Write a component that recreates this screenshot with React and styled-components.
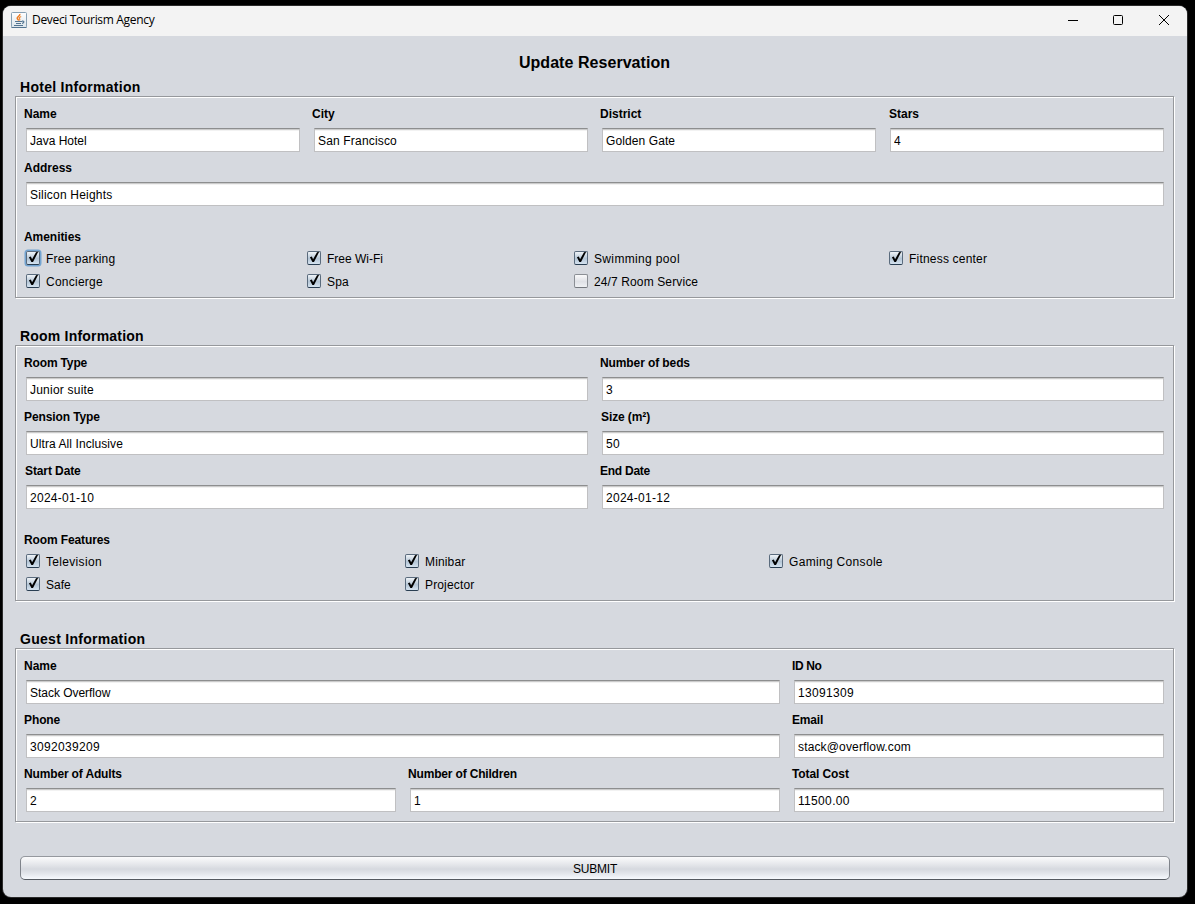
import React from "react";
import styled, { createGlobalStyle, css } from "styled-components";

const GlobalStyle = createGlobalStyle`
  * { box-sizing: border-box; }
  html, body { margin: 0; background: #000; }
  body { overflow: hidden; }
`;

const Desktop = styled.div`
  width: 1195px;
  height: 904px;
  padding: 6px 0 0 3px;
  background: #000;
  color: #000;
  font-family: "Liberation Sans", Arial, sans-serif;
  font-size: 12px;
`;

const Window = styled.div`
  display: flex;
  flex-direction: column;
  width: 1184px;
  height: 891px;
  overflow: hidden;
  border-radius: 8px;
  background: #d6d9df;
  box-shadow: 0 0 0 1px #2b2b2b;
`;

const TitleBar = styled.header`
  display: flex;
  align-items: center;
  flex: none;
  height: 30px;
  padding: 0 0 2px 8px;
  background: #f3f3f3;
`;

const WindowTitle = styled.div`
  flex: 1;
  margin-left: 5px;
  font-family: "Open Sans", "Noto Sans", sans-serif;
  font-size: 12px;
  line-height: 28px;
  letter-spacing: -0.32px;
`;

const WindowButton = styled.div`
  display: flex;
  align-items: center;
  justify-content: ${(p) => p.$align || "center"};
  width: 46px;
  height: 28px;
  padding-left: ${(p) => p.$inset || 0}px;
`;

const Body = styled.main`
  display: flex;
  flex-direction: column;
  padding: 0 13px 0 12px;
`;

const Heading = styled.h1`
  height: 39px;
  margin: 0;
  font-size: 16px;
  line-height: 54px;
  text-align: center;
  letter-spacing: 0.05px;
`;

const Section = styled.section`
  margin-bottom: ${(p) => p.$after}px;
`;

const SectionTitle = styled.h2`
  height: 21px;
  margin: 0 0 0 5px;
  font-size: 14px;
  line-height: 24px;
  letter-spacing: ${(p) => p.$spacing || 0.28}px;
`;

const Panel = styled.div`
  height: ${(p) => p.$height}px;
  padding: 1px 9px 0 10px;
  border: 1px solid #96989c;
  box-shadow: 1px 1px 0 #fff, inset 1px 1px 0 #fff;
`;

const FieldRow = styled.div`
  display: grid;
  grid-template-columns: ${(p) => p.$columns};
  column-gap: 14px;
`;

const Label = styled.label`
  display: block;
  height: ${(p) => p.$height || 30}px;
  margin-left: ${(p) => -2 + (p.$shift || 0)}px;
  padding-top: ${(p) => p.$top || 9}px;
  font-weight: bold;
  line-height: 14px;
  letter-spacing: ${(p) => p.$spacing || 0}px;
  white-space: nowrap;
`;

const Input = styled.input`
  display: block;
  width: 100%;
  height: 24px;
  margin: 0;
  padding: 1px 3px 0;
  border: 1px solid #c0c0c2;
  border-top-color: #8d8e8f;
  border-radius: 0;
  outline: none;
  background: #fff;
  box-shadow: inset 0 1px 0 #cbcbcb, inset 0 2px 0 #f2f2f2;
  color: #000;
  font: 12px/20px "Liberation Sans", Arial, sans-serif;
  letter-spacing: ${(p) => p.$spacing}px;
`;

const CheckGrid = styled.div`
  display: grid;
  grid-template-columns: ${(p) => p.$columns};
  grid-auto-rows: 23px;
`;

const CheckItem = styled.div`
  display: flex;
  align-items: flex-start;
  gap: 6px;
  line-height: 17px;
  letter-spacing: ${(p) => p.$spacing}px;
  white-space: nowrap;
`;

const CheckBox = styled.span`
  display: block;
  flex: none;
  width: 14px;
  height: 14px;
  border: 1px solid #8b8f95;
  border-bottom-color: #74787e;
  border-radius: 2px;
  background: linear-gradient(#fafafb, #dfe1e6 55%, #eff1f4);
  ${(p) =>
    p.$checked &&
    css`
      border-color: #5a6b7d;
      border-bottom-color: #293e52;
      background: linear-gradient(#f0f4f8, #b4c5d5 55%, #d5e3f0);
    `}
  ${(p) =>
    p.$focused &&
    css`
      box-shadow: 0 0 0 1.5px #73a4d1;
    `}
`;

const CheckMark = styled.svg`
  display: block;
  margin: -1px;
  overflow: visible;
`;

const Submit = styled.button`
  height: 24px;
  margin: 0 4px 0 5px;
  padding: 1px 0 0;
  border: 1px solid #7f838a;
  border-top-color: #95989e;
  border-bottom-color: #555a61;
  border-radius: 5px;
  background: linear-gradient(#fbfbfc 0%, #e4e6ea 35%, #d6d9df 55%, #e3e6eb 75%, #f7fafe 100%);
  color: #000;
  font: 12px/20px "Liberation Sans", Arial, sans-serif;
  letter-spacing: -0.2px;
`;

function JavaIcon() {
  return (
    <svg width="16" height="16" viewBox="0 0 16 16" fill="none">
      <defs>
        <linearGradient id="tile" x1="0" y1="0" x2="0" y2="1">
          <stop offset="0" stopColor="#fff" />
          <stop offset="1" stopColor="#dce5eb" />
        </linearGradient>
      </defs>
      <rect x="0.5" y="0.5" width="15" height="15" rx="1" fill="url(#tile)" stroke="#87a0b3" />
      <path d="M0.5 15.5H15.5" stroke="#547591" />
      <path d="M8.8 2C9.5 4 5.8 4.6 6.2 6.4C6.4 7.3 7.6 7.7 7.7 8.6" stroke="#ee7b20" strokeWidth="1.5" />
      <path d="M10.2 4.5C8.2 5.2 7.8 6 8.7 7C9 7.5 8.8 8 8.5 8.6" stroke="#f08a35" strokeWidth="1.2" />
      <path d="M4 9.5H11M5 11.5H10M3 13.5H12" stroke="#547591" />
      <path d="M11 9.2C13.6 8.6 13.4 11 11 11.3" stroke="#547591" strokeWidth="1.2" />
    </svg>
  );
}

function Check({ label, checked = true, focused = false, spacing = 0 }) {
  return (
    <CheckItem $spacing={spacing}>
      <CheckBox $checked={checked} $focused={focused}>
        {checked && (
          <CheckMark width="14" height="14" viewBox="0 0 14 14">
            <path d="M2.9 6.2L4.8 5.5L6.1 8.2L10 1.2L12.2 0.8L7 11H5.4Z" fill="#000" />
          </CheckMark>
        )}
      </CheckBox>
      {label}
    </CheckItem>
  );
}

function Field({ label, value, shift, labelSpacing = 0, spacing = 0 }) {
  return (
    <div>
      <Label $shift={shift} $spacing={labelSpacing}>{label}</Label>
      <Input defaultValue={value} $spacing={spacing} />
    </div>
  );
}

export default function App() {
  return (
    <Desktop>
      <GlobalStyle />
      <Window>
        <TitleBar>
          <JavaIcon />
          <WindowTitle>Deveci Tourism Agency</WindowTitle>
          <WindowButton $inset={2}>
            <svg width="10" height="10" stroke="#000"><path d="M0 5.5H10" /></svg>
          </WindowButton>
          <WindowButton>
            <svg width="10" height="10" fill="none" stroke="#000"><rect x="0.5" y="0.5" width="9" height="9" rx="1" /></svg>
          </WindowButton>
          <WindowButton>
            <svg width="10" height="10" stroke="#000"><path d="M0 0L10 10M10 0L0 10" /></svg>
          </WindowButton>
        </TitleBar>
        <Body>
          <Heading>Update Reservation</Heading>

          <Section $after={26}>
            <SectionTitle>Hotel Information</SectionTitle>
            <Panel $height={202}>
              <FieldRow $columns="repeat(4, 274px)">
                <Field label="Name" value="Java Hotel" />
                <Field label="City" value="San Francisco" spacing={0.17} />
                <Field label="District" value="Golden Gate" spacing={0.1} />
                <Field label="Stars" value="4" shift={1} />
              </FieldRow>
              <FieldRow $columns="1fr">
                <Field label="Address" value="Silicon Heights" spacing={0.2} />
              </FieldRow>
              <Label $height={45} $top={24} $spacing={-0.05}>Amenities</Label>
              <CheckGrid $columns="281px 267px 315px auto">
                <Check label="Free parking" focused spacing={0.16} />
                <Check label="Free Wi-Fi" />
                <Check label="Swimming pool" spacing={0.35} />
                <Check label="Fitness center" spacing={0.2} />
                <Check label="Concierge" spacing={0.25} />
                <Check label="Spa" spacing={0.15} />
                <Check label="24/7 Room Service" checked={false} spacing={0.12} />
              </CheckGrid>
            </Panel>
          </Section>

          <Section $after={26}>
            <SectionTitle $spacing={0.2}>Room Information</SectionTitle>
            <Panel $height={256}>
              <FieldRow $columns="1fr 1fr">
                <Field label="Room Type" value="Junior suite" labelSpacing={-0.15} spacing={0.22} />
                <Field label="Number of beds" value="3" labelSpacing={-0.1} />
                <Field label="Pension Type" value="Ultra All Inclusive" labelSpacing={-0.1} spacing={0.08} />
                <Field label="Size (m²)" value="50" shift={1} labelSpacing={-0.1} spacing={0.33} />
                <Field label="Start Date" value="2024-01-10" shift={1} labelSpacing={-0.1} spacing={0.27} />
                <Field label="End Date" value="2024-01-12" labelSpacing={-0.25} spacing={0.27} />
              </FieldRow>
              <Label $height={45} $top={24} $spacing={-0.12}>Room Features</Label>
              <CheckGrid $columns="379px 364px auto">
                <Check label="Television" spacing={0.32} />
                <Check label="Minibar" spacing={0.15} />
                <Check label="Gaming Console" spacing={0.32} />
                <Check label="Safe" />
                <Check label="Projector" spacing={0.15} />
              </CheckGrid>
            </Panel>
          </Section>

          <Section $after={34}>
            <SectionTitle>Guest Information</SectionTitle>
            <Panel $height={174}>
              <FieldRow $columns="754px 370px">
                <Field label="Name" value="Stack Overflow" spacing={-0.03} />
                <Field label="ID No" value="13091309" labelSpacing={-0.4} spacing={0.33} />
                <Field label="Phone" value="3092039209" labelSpacing={-0.1} spacing={0.33} />
                <Field label="Email" value="stack@overflow.com" labelSpacing={-0.2} spacing={0.15} />
              </FieldRow>
              <FieldRow $columns="repeat(3, 370px)">
                <Field label="Number of Adults" value="2" labelSpacing={-0.15} />
                <Field label="Number of Children" value="1" labelSpacing={-0.17} />
                <Field label="Total Cost" value="11500.00" labelSpacing={-0.1} spacing={0.33} />
              </FieldRow>
            </Panel>
          </Section>

          <Submit>SUBMIT</Submit>
        </Body>
      </Window>
    </Desktop>
  );
}
